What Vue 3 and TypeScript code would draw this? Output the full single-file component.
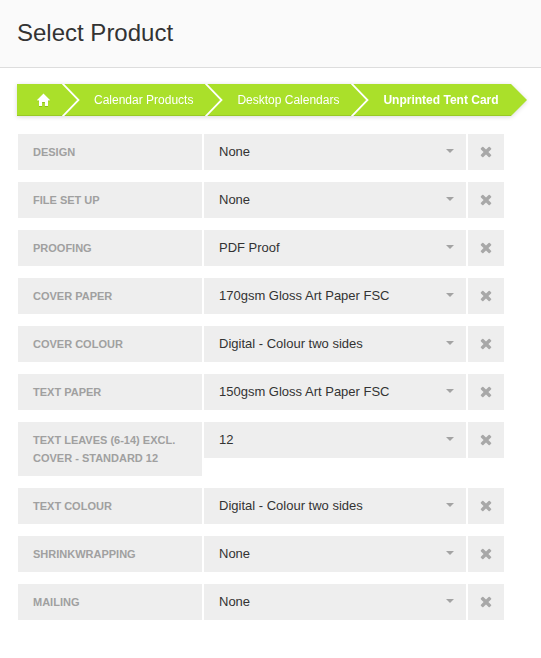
<script setup lang="ts">
import { reactive } from 'vue'

interface Option {
  id: string
  label: string
  value: string
  choices: string[]
}

const crumbs: string[] = ['Calendar Products', 'Desktop Calendars', 'Unprinted Tent Card']

const make = (id: string, label: string, value: string): Option => ({ id, label, value, choices: [value] })

const options = reactive<Option[]>([
  make('design', 'Design', 'None'),
  make('file-set-up', 'File set up', 'None'),
  make('proofing', 'Proofing', 'PDF Proof'),
  make('cover-paper', 'Cover paper', '170gsm Gloss Art Paper FSC'),
  make('cover-colour', 'Cover colour', 'Digital - Colour two sides'),
  make('text-paper', 'Text paper', '150gsm Gloss Art Paper FSC'),
  make('text-leaves', 'Text leaves (6-14) excl. cover - standard 12', '12'),
  make('text-colour', 'Text colour', 'Digital - Colour two sides'),
  make('shrinkwrapping', 'Shrinkwrapping', 'None'),
  make('mailing', 'Mailing', 'None'),
])

function remove(id: string): void {
  const index = options.findIndex((option) => option.id === id)
  if (index >= 0) options.splice(index, 1)
}
</script>

<template>
  <div class="page">
    <header class="header">
      <h1>Select Product</h1>
    </header>

    <main class="content">
      <nav class="crumbs" aria-label="Breadcrumb">
        <a class="crumb home" href="#" aria-label="Home">
          <svg width="13" height="14" viewBox="0 0 13 14" aria-hidden="true">
            <path d="M6.5 1.8 L13 8.3 H11 V14 H7.9 V10 H5.1 V14 H2 V8.3 H0 Z" fill="#8dbd1e" />
            <path d="M6.5 0.5 L13 7 L12.6 7.6 H11 V13 H7.9 V9 H5.1 V13 H2 V7.6 H0.4 L0 7 Z" fill="#fff" />
          </svg>
        </a>
        <template v-for="(crumb, index) in crumbs" :key="crumb">
          <svg class="divider" width="18" height="32" viewBox="0 0 18 32" aria-hidden="true">
            <path d="M0.5 -0.5 L16.5 16 L0.5 32.5" fill="none" stroke="#fff" stroke-width="1.8" />
          </svg>
          <a class="crumb" :class="{ current: index === crumbs.length - 1 }" href="#">{{ crumb }}</a>
        </template>
        <svg class="tip" width="16" height="32" viewBox="0 0 16 32" aria-hidden="true">
          <path d="M0 0 L16 16 L0 32 Z" fill="#aae02a" />
        </svg>
      </nav>

      <form class="options" @submit.prevent>
        <div v-for="option in options" :key="option.id" class="row">
          <label :for="option.id">{{ option.label }}</label>
          <div class="field">
            <select :id="option.id" v-model="option.value">
              <option v-for="choice in option.choices" :key="choice" :value="choice">{{ choice }}</option>
            </select>
            <svg class="caret" width="8" height="4" viewBox="0 0 8 4" aria-hidden="true">
              <path d="M0 0 H8 L4 4 Z" fill="#a3a3a3" />
            </svg>
          </div>
          <button type="button" :aria-label="'Remove ' + option.label" @click="remove(option.id)">
            <svg width="16" height="16" viewBox="0 64 1792 1792" aria-hidden="true">
              <path
                d="M1490 1322q0 40-28 68l-136 136q-28 28-68 28t-68-28l-294-294-294 294q-28 28-68 28t-68-28l-136-136q-28-28-28-68t28-68l294-294-294-294q-28-28-28-68t28-68l136-136q28-28 68-28t68 28l294 294 294-294q28-28 68-28t68 28l136 136q28 28 28 68t-28 68l-294 294 294 294q28 28 28 68z"
                fill="#a8a8a8"
              />
            </svg>
          </button>
        </div>
      </form>
    </main>
  </div>
</template>

<style>
body {
  margin: 0;
  background: #fff;
}
</style>

<style scoped>
.page {
  font-family: "Liberation Sans", Arial, sans-serif;
  color: #333;
}

.header {
  padding: 16px 17px 17px;
  background: #fafafa;
  border-bottom: 1px solid #ddd;
}

h1 {
  margin: 0;
  font-size: 24px;
  line-height: 34px;
  font-weight: 400;
}

.content {
  padding: 16px 14px 38px 17px;
}

.crumbs {
  display: flex;
  height: 32px;
  filter: drop-shadow(0 1px 2px rgba(0, 0, 0, 0.15));
}

.crumb {
  display: flex;
  align-items: center;
  padding: 0 12px 0 14px;
  background: #aae02a;
  box-shadow: inset 0 -1px #98c926;
  color: #fff;
  font-size: 12px;
  text-decoration: none;
  white-space: nowrap;
}

.home {
  padding: 0 12px 0 20px;
}

.current {
  font-weight: 700;
}

.divider {
  flex: none;
  background: #aae02a;
  box-shadow: inset 0 -1px #98c926;
}

.tip {
  flex: none;
}

.options {
  display: grid;
  gap: 12px;
  margin: 18px 23px 0 1px;
}

.row {
  display: grid;
  grid-template-columns: 184fr 262fr 36px;
  gap: 2px;
  align-items: start;
}

label {
  padding: 9px 15px;
  background: #eee;
  color: #a0a0a0;
  font-size: 11px;
  line-height: 18px;
  font-weight: 700;
  text-transform: uppercase;
}

.field {
  display: grid;
  align-items: center;
  background: #eee;
}

.field > * {
  grid-area: 1 / 1;
}

select {
  width: 100%;
  height: 36px;
  padding: 0 32px 2px 15px;
  appearance: none;
  border: 0;
  border-radius: 0;
  background: transparent;
  color: #333;
  font-family: inherit;
  font-size: 13px;
}

.caret {
  justify-self: end;
  margin: 0 12px 2px 0;
  pointer-events: none;
}

button {
  display: grid;
  place-items: center;
  height: 36px;
  padding: 0 1px 0 0;
  border: 0;
  background: #eee;
}
</style>
